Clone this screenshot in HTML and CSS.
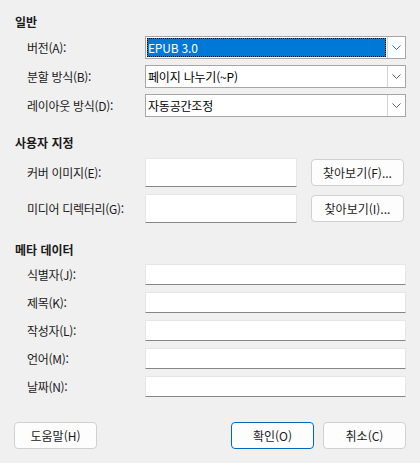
FILE: index.html
```html
<!DOCTYPE html>
<html lang="ko">
<head>
<meta charset="utf-8">
<link rel="stylesheet" href="styles.css">
</head>
<body>
<div class="dialog">
  <div class="section general">
    <div class="section-title">일반</div>
    <div class="rows rows-general">
      <div class="row">
        <div class="label">버전(A):</div>
        <div class="select">
          <div class="select-value focused">EPUB 3.0</div>
          <div class="select-btn"><svg width="9" height="6" viewBox="0 0 9 6"><polyline points="0.5,0.5 4.5,4.5 8.5,0.5" fill="none" stroke="#606060" stroke-width="1"/></svg></div>
        </div>
      </div>
      <div class="row">
        <div class="label">분할 방식(B):</div>
        <div class="select">
          <div class="select-value">페이지 나누기(~P)</div>
          <div class="select-btn"><svg width="9" height="6" viewBox="0 0 9 6"><polyline points="0.5,0.5 4.5,4.5 8.5,0.5" fill="none" stroke="#606060" stroke-width="1"/></svg></div>
        </div>
      </div>
      <div class="row">
        <div class="label">레이아웃 방식(D):</div>
        <div class="select">
          <div class="select-value">자동공간조정</div>
          <div class="select-btn"><svg width="9" height="6" viewBox="0 0 9 6"><polyline points="0.5,0.5 4.5,4.5 8.5,0.5" fill="none" stroke="#606060" stroke-width="1"/></svg></div>
        </div>
      </div>
    </div>
  </div>

  <div class="section custom">
    <div class="section-title">사용자 지정</div>
    <div class="rows rows-custom">
      <div class="row">
        <div class="label">커버 이미지(E):</div>
        <div class="field-with-btn">
          <div class="input tall"></div>
          <div class="btn browse">찾아보기(F)...</div>
        </div>
      </div>
      <div class="row">
        <div class="label">미디어 디렉터리(G):</div>
        <div class="field-with-btn">
          <div class="input tall"></div>
          <div class="btn browse">찾아보기(I)...</div>
        </div>
      </div>
    </div>
  </div>

  <div class="section meta">
    <div class="section-title">메타 데이터</div>
    <div class="rows rows-meta">
      <div class="row"><div class="label">식별자(J):</div><div class="input short"></div></div>
      <div class="row"><div class="label">제목(K):</div><div class="input short"></div></div>
      <div class="row"><div class="label">작성자(L):</div><div class="input short"></div></div>
      <div class="row"><div class="label">언어(M):</div><div class="input short"></div></div>
      <div class="row"><div class="label">날짜(N):</div><div class="input short"></div></div>
    </div>
  </div>

  <div class="footer">
    <div class="btn footer-btn">도움말(H)</div>
    <div class="footer-right">
      <div class="btn footer-btn default">확인(O)</div>
      <div class="btn footer-btn">취소(C)</div>
    </div>
  </div>
</div>
</body>
</html>
```

FILE: styles.css
```css
html, body {
  margin: 0;
  padding: 0;
  background: #f0f0f0;
}
body {
  font-family: "Noto Sans CJK KR", "Noto Sans", sans-serif;
  font-size: 12px;
  color: #1a1a1a;
  width: 420px;
  height: 463px;
  overflow: hidden;
}
.dialog {
  padding: 14px 14px 0 15px;
  display: flex;
  flex-direction: column;
}
.section-title {
  font-weight: bold;
  height: 16px;
  line-height: 16px;
  color: #1a1a1a;
}
.rows {
  display: flex;
  flex-direction: column;
  padding-left: 12px;
}
.row {
  display: flex;
  align-items: center;
}
.label {
  width: 118px;
  flex: none;
  white-space: nowrap;
  letter-spacing: -0.3px;
}
.rows-general { margin-top: 6px; gap: 6px; }
.custom { margin-top: 18px; }
.rows-custom { margin-top: 7px; gap: 7px; }
.meta { margin-top: 19px; }
.rows-meta { margin-top: 6px; gap: 7px; }

.select {
  flex: 1;
  height: 23px;
  box-sizing: border-box;
  border: 1px solid #a6a6a6;
  background: #fff;
  display: flex;
}
.select-value {
  flex: 1;
  margin: 1px;
  padding-left: 1px;
  display: flex;
  align-items: center;
  white-space: nowrap;
  overflow: hidden;
  color: #000;
  letter-spacing: -0.2px;
}
.select-value.focused {
  background: #0078d7;
  color: #fff;
  outline: 1px dotted #000;
  outline-offset: -1px;
}
.select-btn {
  width: 17px;
  flex: none;
  border-left: 1px solid #d4d4d4;
  display: flex;
  align-items: center;
  justify-content: center;
}
.select-btn svg { display: block; }

.field-with-btn {
  flex: 1;
  display: flex;
  align-items: center;
  gap: 14px;
}
.input {
  box-sizing: border-box;
  background: #fff;
  border: 1px solid #e6e6e6;
  border-bottom: 1px solid #868686;
}
.input.tall {
  width: 152px;
  height: 29px;
}
.input.short {
  flex: 1;
  height: 21px;
}
.btn {
  box-sizing: border-box;
  background: #fdfdfd;
  border: 1px solid #d0d0d0;
  border-radius: 4px;
  display: flex;
  align-items: center;
  justify-content: center;
  color: #1a1a1a;
  white-space: nowrap;
}
.browse {
  width: 93px;
  height: 27px;
}
.footer {
  margin-top: 25px;
  display: flex;
  justify-content: space-between;
  margin-left: -1px;
}
.footer-right {
  display: flex;
  gap: 9px;
}
.footer-btn {
  width: 83px;
  height: 27px;
}
.footer-btn.default {
  border: 1px solid #0067c0;
}
```
